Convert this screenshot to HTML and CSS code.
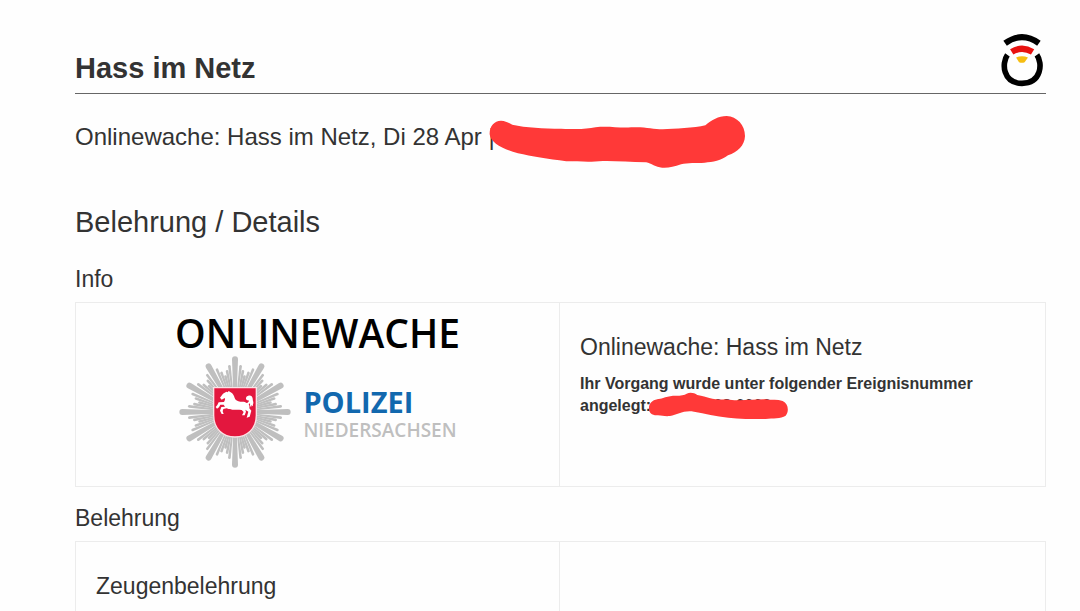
FILE: index.html
```html
<!DOCTYPE html>
<html lang="de">
<head>
    <meta charset="UTF-8">
    <meta name="viewport" content="width=device-width, initial-scale=1.0">
    <title>Hass im Netz</title>
    <link rel="stylesheet" href="styles.css">
</head>
<body>
    <div class="page">
        <header>
            <h1>Hass im Netz</h1>
            <svg class="site-logo" viewBox="63 40 126 160" role="img" aria-label="Logo" fill="none">
                <path d="M75 68Q126 31 177 68" stroke="#000" stroke-width="18"/>
                <path d="M95 94Q126 75 158 94" stroke="#e8110f" stroke-width="19"/>
                <path d="M108 111Q126 104 144 111L134 125Q126 129 117 125Z" fill="#f6bd12"/>
                <path d="M82 103C64 128 68 189 126 189C185 189 189 128 171 103" stroke="#000" stroke-width="17"/>
            </svg>
        </header>

        <main>
            <p class="meta">Onlinewache: Hass im Netz, Di 28 Apr |<span class="redacted">
                <svg class="stroke-large" viewBox="58 28 772 162" fill="#ff3938" aria-hidden="true">
                    <path d="M60 86C59 62 73 46 94 45C108 45 116 52 128 57C170 66 220 69 275 69C320 71 350 71 378 65C415 60 450 68 485 65C525 62 550 71 580 71C615 69 675 67 708 59C728 42 746 32 772 31C803 33 827 58 827 91C826 119 805 140 776 149C756 164 730 170 706 171C680 173 655 170 635 176C613 184 597 187 578 186C558 184 546 174 530 170C480 169 435 165 400 166C360 170 330 167 290 167C235 160 185 152 145 143C100 130 63 113 60 86Z"/>
                </svg>
            </span></p>

            <h2>Belehrung / Details</h2>

            <h3>Info</h3>
            <section class="panel">
                <div class="cell brand">
                    <div class="brand-title">ONLINEWACHE</div>
                    <div class="brand-row">
                        <svg class="star" viewBox="22 14 342 348" role="img" aria-label="Polizeistern">
                            <defs>
                                <g id="rays" fill="#bfbfbf">
                                    <path d="M-5 -50L-9 -158A9 9 0 0 1 9 -158L5 -50Z"/>
                                    <path d="M-2 -50L-4 -138A4 4 0 0 1 4 -138L2 -50Z" transform="rotate(7)"/>
                                    <path d="M-2 -50L-4 -124A4 4 0 0 1 4 -124L2 -50Z" transform="rotate(11)"/>
                                    <path d="M-2 -50L-4 -110A4 4 0 0 1 4 -110L2 -50Z" transform="rotate(15)"/>
                                    <path d="M-2 -50L-4 -124A4 4 0 0 1 4 -124L2 -50Z" transform="rotate(19)"/>
                                    <path d="M-2 -50L-4 -138A4 4 0 0 1 4 -138L2 -50Z" transform="rotate(23)"/>
                                </g>
                            </defs>
                            <g transform="translate(193 188)">
                                <use href="#rays"/>
                                <use href="#rays" transform="rotate(30)"/>
                                <use href="#rays" transform="rotate(60)"/>
                                <use href="#rays" transform="rotate(90)"/>
                                <use href="#rays" transform="rotate(120)"/>
                                <use href="#rays" transform="rotate(150)"/>
                                <use href="#rays" transform="rotate(180)"/>
                                <use href="#rays" transform="rotate(210)"/>
                                <use href="#rays" transform="rotate(240)"/>
                                <use href="#rays" transform="rotate(270)"/>
                                <use href="#rays" transform="rotate(300)"/>
                                <use href="#rays" transform="rotate(330)"/>
                            </g>
                            <path d="M129 115H257V198C257 239 229 263 193 263S129 239 129 198Z" fill="#e3173e" stroke="#fbe3e6" stroke-width="4"/>
                            <!-- Niedersachsenross -->
                            <g transform="translate(105 90)" fill="#fff">
                                <path d="M69 35L75 39C82 43 85 49 87 56C89 63 96 66 104 67C112 67 118 66 123 71C130 73 133 79 131 87L137 94L132 112L123 115L128 97L119 91L121 97L117 108L109 108L114 98L108 92C98 91 91 92 80 91C73 90 68 90 63 87L53 89L51 96L54 104L48 104L43 94L47 83L58 82L54 76L44 76L40 84L34 88L30 83L35 77L39 69L55 68C58 63 59 59 57 56L48 61L43 55L52 43L62 37L66 39Z"/>
                                <path d="M122 73C127 69 131 67 129 63C122 64 119 59 122 53C126 49 134 47 138 51C143 57 140 62 143 68C144 74 140 76 142 81L136 78L137 84C131 80 134 75 133 71C131 74 127 77 124 78Z"/>
                            </g>
                        </svg>
                        <div class="brand-name">
                            <div class="brand-police">POLIZEI</div>
                            <div class="brand-state">NIEDERSACHSEN</div>
                        </div>
                    </div>
                </div>
                <div class="cell">
                    <h4>Onlinewache: Hass im Netz</h4>
                    <p class="notice">Ihr Vorgang wurde unter folgender Ereignisnummer angelegt: <span class="redacted">00000 008 0000
                        <svg class="stroke-small" viewBox="234 202 420 84" fill="#ff3938" aria-hidden="true">
                            <path d="M237 252C236 237 246 227 262 224C281 220 291 215 309 213C328 214 342 212 350 207C361 202 373 205 382 211C398 214 408 217 418 220C438 227 460 224 479 225C510 230 550 224 586 224C606 227 622 224 638 229C655 237 658 259 647 273C632 283 609 280 587 283C548 283 509 283 475 279C437 275 405 267 372 261C340 256 323 270 300 274C282 276 275 271 260 272C245 271 237 264 237 252Z"/>
                        </svg>
                    </span></p>
                </div>
            </section>

            <h3>Belehrung</h3>
            <section class="panel">
                <div class="cell">
                    <h4>Zeugenbelehrung</h4>
                </div>
                <div class="cell"></div>
            </section>
        </main>
    </div>
</body>
</html>
```
FILE: styles.css
```css
* {
    margin: 0;
    padding: 0;
    box-sizing: border-box;
}

body {
    font-family: "Liberation Sans", Arial, sans-serif;
    color: #333;
    background: #fefefe;
}

.page {
    padding: 34px 34px 0 75px;
}

header {
    display: flex;
    justify-content: space-between;
    align-items: flex-end;
    padding-bottom: 6px;
    border-bottom: 1px solid #666;
}

h1 {
    font-size: 29px;
    line-height: 34px;
    padding-bottom: 2px;
}

.site-logo {
    width: 42px;
    height: 53px;
    margin-right: 3px;
}

.meta {
    margin-top: 29px;
    font-size: 24px;
    line-height: 28px;
}

h2 {
    margin-top: 54px;
    font-size: 29px;
    line-height: 34px;
    font-weight: normal;
}

h3 {
    margin-top: 26px;
    margin-bottom: 9px;
    font-size: 23px;
    line-height: 28px;
    font-weight: normal;
}

.panel + h3 {
    margin-top: 17px;
}

h4 {
    font-size: 23px;
    line-height: 28px;
    font-weight: normal;
}

.panel {
    display: grid;
    grid-template-columns: 483fr 486fr;
    border: 1px solid #ececec;
}

.cell {
    padding: 30px 20px;
}

.cell + .cell {
    border-left: 1px solid #ececec;
}

.notice {
    margin-top: 12px;
    font-size: 16px;
    line-height: 22px;
    font-weight: bold;
}

/* marker strokes lie over the text they hide */
.redacted {
    position: relative;
}

.redacted svg {
    position: absolute;
}

.stroke-large {
    top: -8px;
    left: -6px;
    width: 257px;
    height: 54px;
}

.stroke-small {
    top: -5px;
    left: -8px;
    width: 140px;
    height: 28px;
}

.brand {
    display: flex;
    flex-direction: column;
    align-items: center;
    padding: 8px 20px 16px;
}

.brand-title {
    font-family: "Open Sans", sans-serif;
    font-size: 39px;
    line-height: 43px;
    font-weight: 600;
    color: #000;
}

.brand-row {
    display: flex;
    align-items: center;
    gap: 11px;
}

.star {
    width: 114px;
    height: 116px;
}

.brand-name {
    padding-top: 3px;
    font-family: "Open Sans", sans-serif;
}

.brand-police {
    font-size: 29px;
    line-height: 32px;
    font-weight: bold;
    color: #1268ae;
}

.brand-state {
    font-size: 19px;
    line-height: 24px;
    font-weight: 600;
    color: #bfbfbf;
}
```
